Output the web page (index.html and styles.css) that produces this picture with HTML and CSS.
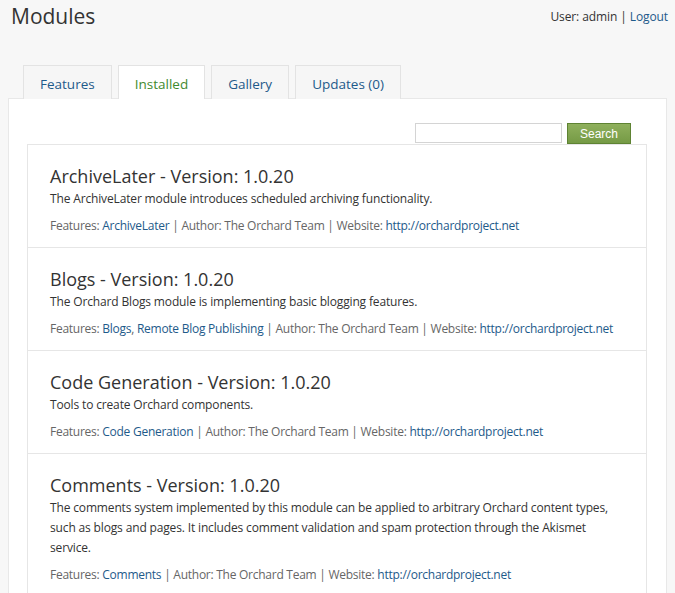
FILE: index.html
```html
<!DOCTYPE html>
<html>
<head>
<meta charset="utf-8">
<title>Modules</title>
<link rel="stylesheet" href="styles.css">
</head>
<body>
<div class="header">
  <h1 class="title">Modules</h1>
  <div class="user">User: admin | <a href="#">Logout</a></div>
</div>
<ul class="tabs">
  <li class="tab"><a href="#">Features</a></li>
  <li class="tab active"><a href="#">Installed</a></li>
  <li class="tab"><a href="#">Gallery</a></li>
  <li class="tab"><a href="#">Updates (0)</a></li>
</ul>
<div class="panel">
  <form class="search">
    <input class="search-input" type="text">
    <button class="search-btn" type="button">Search</button>
  </form>
  <ul class="modules">
    <li class="module">
      <h2 class="module-title">ArchiveLater - Version: 1.0.20</h2>
      <p class="module-desc">The ArchiveLater module introduces scheduled archiving functionality.</p>
      <p class="module-meta">Features: <a href="#">ArchiveLater</a> | Author: The Orchard Team | Website: <a href="#">http://orchardproject.net</a></p>
    </li>
    <li class="module">
      <h2 class="module-title">Blogs - Version: 1.0.20</h2>
      <p class="module-desc">The Orchard Blogs module is implementing basic blogging features.</p>
      <p class="module-meta">Features: <a href="#">Blogs</a>, <a href="#">Remote Blog Publishing</a> | Author: The Orchard Team | Website: <a href="#">http://orchardproject.net</a></p>
    </li>
    <li class="module">
      <h2 class="module-title">Code Generation - Version: 1.0.20</h2>
      <p class="module-desc">Tools to create Orchard components.</p>
      <p class="module-meta">Features: <a href="#">Code Generation</a> | Author: The Orchard Team | Website: <a href="#">http://orchardproject.net</a></p>
    </li>
    <li class="module">
      <h2 class="module-title">Comments - Version: 1.0.20</h2>
      <p class="module-desc">The comments system implemented by this module can be applied to arbitrary Orchard content types, such as blogs and pages. It includes comment validation and spam protection through the Akismet service.</p>
      <p class="module-meta">Features: <a href="#">Comments</a> | Author: The Orchard Team | Website: <a href="#">http://orchardproject.net</a></p>
    </li>
  </ul>
</div>
</body>
</html>
```
FILE: styles.css
```css
* { box-sizing: border-box; }
html, body { margin: 0; padding: 0; }
body {
  background: #f7f7f7;
  font-family: "Open Sans", "Noto Sans", sans-serif;
  color: #333;
  font-size: 12px;
  overflow: hidden;
}
a { color: #1e5a8a; text-decoration: none; }
.header {
  display: flex;
  justify-content: space-between;
  align-items: flex-start;
  padding: 0 7px 0 11px;
}
.title {
  margin: 2px 0 0;
  font-size: 21px;
  font-weight: normal;
  color: #333;
  line-height: 28px;
}
.user {
  margin-top: 8px;
  font-size: 12px;
  line-height: 18px;
  color: #333;
  letter-spacing: -0.1px;
}
.tabs {
  list-style: none;
  margin: 35px 0 0;
  padding: 0 0 0 23px;
  display: flex;
  gap: 6px;
  position: relative;
  z-index: 1;
}
.tab {
  height: 34px;
  border: 1px solid #e3e3e3;
  border-bottom: none;
  background: #f6f6f6;
  display: flex;
  align-items: center;
  margin-bottom: -1px;
}
.tab a {
  display: block;
  padding: 2px 16px 0;
  font-size: 13.5px;
  color: #1e5a8a;
}
.tab.active { background: #fff; }
.tab.active a { color: #3f8a2e; }
.panel {
  margin: 0 8px;
  background: #fff;
  border: 1px solid #e8e8e8;
  padding: 24px 19px 0 18px;
  height: 520px;
}
.search {
  display: flex;
  justify-content: flex-end;
  align-items: center;
  gap: 5px;
  padding-right: 16px;
  height: 20px;
  margin: 0;
}
.search-input {
  width: 147px;
  height: 20px;
  border: 1px solid #d4d4d4;
  background: #fff;
  margin: 0;
}
.search-btn {
  width: 64px;
  height: 21px;
  margin-top: 1px;
  border: 1px solid #5e8333;
  background: linear-gradient(#8fb05c, #759a45);
  color: #fff;
  font-family: "Liberation Sans", Arial, sans-serif;
  font-size: 12px;
  padding: 0;
}
.modules {
  list-style: none;
  margin: 1px 0 0;
  padding: 0;
  border: 1px solid #e6e6e6;
}
.module {
  border-bottom: 1px solid #e6e6e6;
  padding: 18px 22px 11px;
}
.module-title {
  margin: 0;
  font-size: 18px;
  font-weight: normal;
  line-height: 26px;
  color: #333;
}
.module-desc {
  margin: 0;
  font-size: 12px;
  line-height: 20px;
  color: #333;
  letter-spacing: -0.15px;
}
.module-meta {
  margin: 7px 0 0;
  font-size: 12px;
  line-height: 20px;
  color: #666;
  letter-spacing: -0.26px;
}
```
